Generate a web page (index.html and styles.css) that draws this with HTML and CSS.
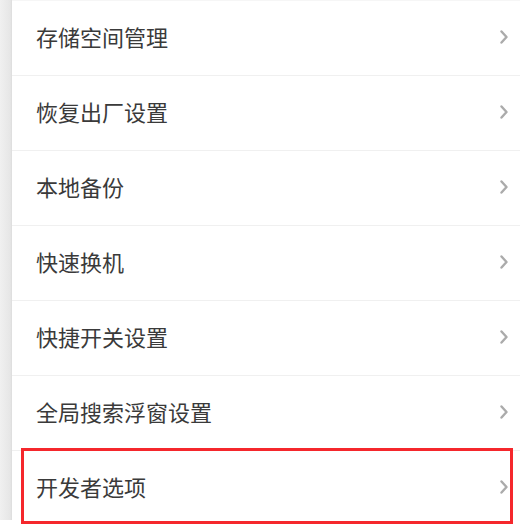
FILE: index.html
```html
<!DOCTYPE html>
<html lang="zh-CN">
<head>
    <meta charset="UTF-8">
    <meta name="viewport" content="width=device-width, initial-scale=1.0">
    <title>设置</title>
    <link rel="stylesheet" href="styles.css">
</head>
<body>
    <div class="page">
        <div class="side-strip"></div>
        <ul class="settings-list">
            <li class="row"><span class="label">存储空间管理</span><svg class="chevron" viewBox="0 0 8 14"><polyline points="1.5,1.5 6.5,7 1.5,12.5"/></svg></li>
            <li class="row"><span class="label">恢复出厂设置</span><svg class="chevron" viewBox="0 0 8 14"><polyline points="1.5,1.5 6.5,7 1.5,12.5"/></svg></li>
            <li class="row"><span class="label">本地备份</span><svg class="chevron" viewBox="0 0 8 14"><polyline points="1.5,1.5 6.5,7 1.5,12.5"/></svg></li>
            <li class="row"><span class="label">快速换机</span><svg class="chevron" viewBox="0 0 8 14"><polyline points="1.5,1.5 6.5,7 1.5,12.5"/></svg></li>
            <li class="row"><span class="label">快捷开关设置</span><svg class="chevron" viewBox="0 0 8 14"><polyline points="1.5,1.5 6.5,7 1.5,12.5"/></svg></li>
            <li class="row"><span class="label">全局搜索浮窗设置</span><svg class="chevron" viewBox="0 0 8 14"><polyline points="1.5,1.5 6.5,7 1.5,12.5"/></svg></li>
            <li class="row highlighted"><span class="label">开发者选项</span><svg class="chevron" viewBox="0 0 8 14"><polyline points="1.5,1.5 6.5,7 1.5,12.5"/></svg></li>
        </ul>
    </div>
</body>
</html>
```

FILE: styles.css
```css
* {
    margin: 0;
    padding: 0;
    box-sizing: border-box;
}

body {
    background: #fff;
    font-family: 'Noto Sans CJK SC', 'Noto Sans', sans-serif;
    color: #3a3a3a;
    overflow: hidden;
}

.page {
    display: flex;
    height: 526px;
}

/* left edge of the screen behind the card */
.side-strip {
    width: 12px;
    height: 520px;
    background: linear-gradient(90deg, #f0f0f0, #e6e6e6 85%, #dcdcdc);
}

.settings-list {
    flex: 1;
    list-style: none;
}

.row {
    position: relative;
    display: flex;
    align-items: center;
    justify-content: space-between;
    height: 75px;
    padding: 0 12px 0 24px;
    border-top: 1px solid #f0f0f0;
    font-size: 22px;
}

.row:first-child {
    border-top-color: #f6f6f6;
}

.label {
    line-height: 1;
    margin-bottom: 4px;
}

.chevron {
    width: 8px;
    height: 14px;
    margin-bottom: 2px;
    fill: none;
    stroke: #ababab;
    stroke-width: 2.4;
    stroke-linecap: round;
    stroke-linejoin: round;
}

/* red annotation frame */
.highlighted::after {
    content: '';
    position: absolute;
    top: -3px;
    left: 9px;
    right: 7px;
    height: 70px;
    border: 3px solid #f5272c;
}
```
